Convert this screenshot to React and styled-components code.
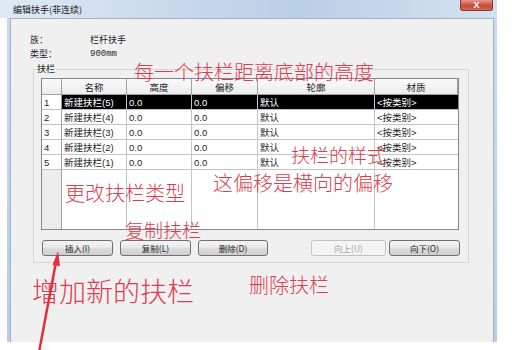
import styled, { createGlobalStyle } from 'styled-components';

const GlobalStyle = createGlobalStyle`
  html, body {
    margin: 0;
    background: #fff;
  }
`;

const Page = styled.div`
  position: relative;
  width: 512px;
  height: 350px;
  overflow: hidden;
  font-family: "Noto Sans CJK SC", sans-serif;
  color: #1e1e1e;
`;

const Window = styled.div`
  width: 497px;
  display: flex;
  flex-direction: column;
`;

const TitleBar = styled.div`
  position: relative;
  height: 18px;
  display: flex;
  align-items: center;
  padding-left: 13px;
  font-size: 9px;
  color: #1a1a1a;
  background: linear-gradient(to right, #dfe9f4 0%, #c8d9ec 35%, #b9cfe6 60%, #d3e2f1 100%);
`;

const CloseButton = styled.div`
  position: absolute;
  right: 4px;
  top: 0;
  width: 33px;
  height: 11px;
  border: 1px solid #8d3a2e;
  border-top: none;
  border-radius: 0 0 3px 3px;
  background: linear-gradient(to bottom, #e59a8b, #c74a36 55%, #d26a4f);
  color: #fff;
  font: bold 9px "Liberation Sans", sans-serif;
  display: flex;
  align-items: center;
  justify-content: center;
  box-sizing: border-box;
`;

const Frame = styled.div`
  margin-left: 7px;
  height: 324px;
  padding: 0 3px;
  background: linear-gradient(to bottom, #c9daee, #b7cde6);
`;

const Client = styled.div`
  height: 100%;
  box-sizing: border-box;
  border: 1px solid #a3b2c4;
  border-bottom: none;
  background: #f0f0f0;
  padding: 14px 0 0 19px;
  font-size: 9px;
`;

const InfoGrid = styled.div`
  display: grid;
  grid-template-columns: 60px auto;
  grid-auto-rows: 14px;
  line-height: 14px;
`;

const Mono = styled.span`
  font-family: "Liberation Mono", monospace;
  font-size: 9px;
`;

const Group = styled.div`
  margin: 8px 0 0 3px;
  width: 436px;
  box-sizing: border-box;
  border: 1px solid #d6d6d6;
  padding: 0 0 6px 7px;
`;

const Legend = styled.div`
  width: fit-content;
  margin: -8px 0 0 -5px;
  padding: 0 1px;
  line-height: 14px;
  background: #f0f0f0;
`;

const Table = styled.div`
  margin-top: 2px;
  width: 418px;
  box-sizing: border-box;
  border: 1px solid #828790;
  background: #fff;
  display: grid;
  grid-template-columns: 20px 65px 65px 66px 117px 83px;
  font-family: "Liberation Sans", "Noto Sans CJK SC", sans-serif;
  font-size: 9.5px;
`;

const HeadCell = styled.div`
  height: 16px;
  box-sizing: border-box;
  border-right: 1px solid #a0a0a0;
  border-bottom: 1px solid #a0a0a0;
  background: linear-gradient(to bottom, #fafafa, #ececec);
  display: flex;
  align-items: center;
  justify-content: center;
  &:last-child { border-right: none; }
`;

const Cell = styled.div`
  height: 15px;
  box-sizing: border-box;
  padding-left: 2px;
  border-right: 1px solid ${p => (p.$num ? '#a0a0a0' : '#c4c4c4')};
  border-bottom: 1px solid #c4c4c4;
  display: flex;
  align-items: center;
  white-space: nowrap;
  background: ${p => (p.$selected ? '#000' : '#fff')};
  color: ${p => (p.$selected ? '#fff' : '#1e1e1e')};
  &:nth-child(6n) { border-right: none; }
`;

const Filler = styled.div`
  height: 59px;
  box-sizing: border-box;
  border-right: 1px solid ${p => (p.$num ? '#a0a0a0' : '#c4c4c4')};
  background: ${p => (p.$num ? '#ececec' : '#fff')};
  &:last-child { border-right: none; }
`;

const ButtonRow = styled.div`
  margin: 10px 0 0 1px;
  width: 418px;
  display: flex;
  justify-content: space-between;
`;

const ButtonGroup = styled.div`
  display: flex;
  gap: ${p => p.$gap}px;
`;

const Button = styled.div`
  width: ${p => p.$w}px;
  height: 16px;
  box-sizing: border-box;
  border: 1px solid ${p => (p.$disabled ? '#c2c2c2' : '#707070')};
  border-radius: 3px;
  background: ${p =>
    p.$disabled
      ? '#f4f4f4'
      : 'linear-gradient(to bottom, #f4f4f4 0%, #ebebeb 45%, #dddddd 50%, #cfcfcf 100%)'};
  color: ${p => (p.$disabled ? '#a3a3a3' : '#1e1e1e')};
  font-size: 8.5px;
  display: flex;
  align-items: center;
  justify-content: center;
`;

const Note = styled.div`
  position: absolute;
  left: ${p => p.$x}px;
  top: ${p => p.$y}px;
  font-size: ${p => p.$size}px;
  line-height: 1;
  color: #dc3c50;
  font-weight: 300;
  white-space: nowrap;
`;

const Arrow = styled.svg`
  position: absolute;
  left: 0;
  top: 0;
  pointer-events: none;
`;

const columns = ['', '名称', '高度', '偏移', '轮廓', '材质'];
const rails = [5, 4, 3, 2, 1];

export default function App() {
  return (
    <Page>
      <GlobalStyle />
      <Window>
        <TitleBar>
          编辑扶手(非连续)
          <CloseButton>X</CloseButton>
        </TitleBar>
        <Frame>
          <Client>
            <InfoGrid>
              <span>族：</span>
              <span>栏杆扶手</span>
              <span>类型：</span>
              <Mono>900mm</Mono>
            </InfoGrid>
            <Group>
              <Legend>扶栏</Legend>
              <Table>
                {columns.map((c, i) => (
                  <HeadCell key={i}>{c}</HeadCell>
                ))}
                {rails.map((n, i) => {
                  const sel = i === 0;
                  return [
                    <Cell key={`n${i}`} $num>{i + 1}</Cell>,
                    <Cell key={`a${i}`} $selected={sel}>新建扶栏({n})</Cell>,
                    <Cell key={`b${i}`} $selected={sel}>0.0</Cell>,
                    <Cell key={`c${i}`} $selected={sel}>0.0</Cell>,
                    <Cell key={`d${i}`} $selected={sel}>默认</Cell>,
                    <Cell key={`e${i}`} $selected={sel}>&lt;按类别&gt;</Cell>,
                  ];
                })}
                {columns.map((c, i) => (
                  <Filler key={`f${i}`} $num={i === 0} />
                ))}
              </Table>
              <ButtonRow>
                <ButtonGroup $gap={7}>
                  <Button $w={71}>插入(I)</Button>
                  <Button $w={71}>复制(L)</Button>
                  <Button $w={70}>删除(D)</Button>
                </ButtonGroup>
                <ButtonGroup $gap={3}>
                  <Button $w={75} $disabled>向上(U)</Button>
                  <Button $w={71}>向下(O)</Button>
                </ButtonGroup>
              </ButtonRow>
            </Group>
          </Client>
        </Frame>
      </Window>

      <Note $x={134} $y={62} $size={20}>每一个扶栏距离底部的高度</Note>
      <Note $x={291} $y={145} $size={19}>扶栏的样式</Note>
      <Note $x={213} $y={173} $size={20}>这偏移是横向的偏移</Note>
      <Note $x={65} $y={183} $size={20}>更改扶栏类型</Note>
      <Note $x={125} $y={220} $size={19}>复制扶栏</Note>
      <Note $x={32} $y={277} $size={27}>增加新的扶栏</Note>
      <Note $x={249} $y={275} $size={20}>删除扶栏</Note>

      <Arrow width="512" height="350" viewBox="0 0 512 350">
        <line x1="39" y1="352" x2="56" y2="262" stroke="#e2303f" strokeWidth="2.5" />
        <polygon points="58,251 52.5,265 60,266" fill="#e2303f" />
      </Arrow>
    </Page>
  );
}
